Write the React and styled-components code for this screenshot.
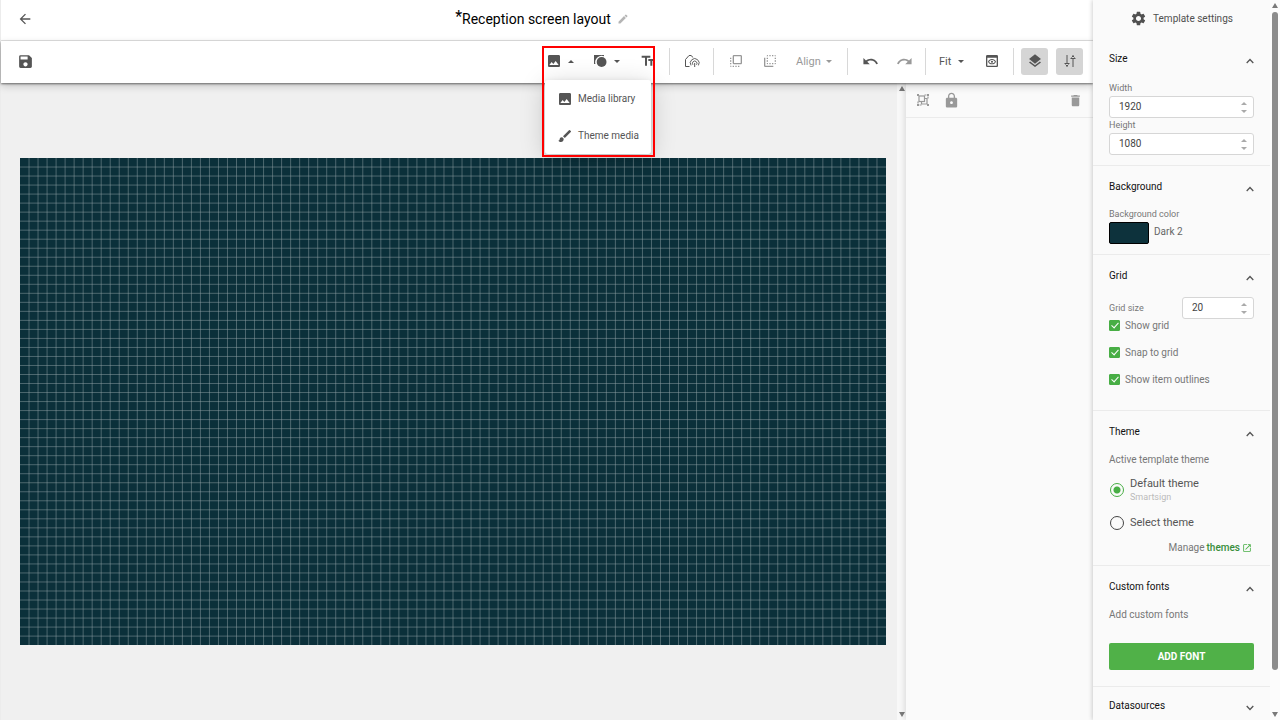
import React, {useState} from "react";
import styled, {createGlobalStyle, css} from "styled-components";
import {
    MdArrowBack,
    MdBrush,
    MdDelete,
    MdEdit,
    MdFlipToBack,
    MdFlipToFront,
    MdImage,
    MdLayers,
    MdLock,
    MdOpenInNew,
    MdOutlinePreview,
    MdRedo,
    MdSave,
    MdSettings,
    MdTextFields,
    MdUndo,
} from "react-icons/md";

const GlobalStyle = createGlobalStyle`
    * {
        box-sizing: border-box;
    }
    body {
        margin: 0;
        font-family: Roboto, "Liberation Sans", sans-serif;
        font-size: 10px;
        color: #666;
        background: #f0f0f0;
        overflow: hidden;
    }
    button, input {
        font: inherit;
        color: inherit;
    }
    svg {
        display: block;
        flex: none;
    }
`;

const Page = styled.div`
    display: flex;
    height: 100vh;
`;

const Editor = styled.div`
    display: flex;
    flex-direction: column;
    flex: 1;
    min-width: 0;
    border-left: 1px solid #ececec;
`;

const Header = styled.header`
    display: flex;
    align-items: center;
    height: 41px;
    padding: 0 48px 2px 10px;
    background: #fff;
    border-bottom: 1px solid #e6e6e6;
`;

const Toolbar = styled.div`
    position: relative;
    z-index: 2;
    display: flex;
    align-items: center;
    height: 42px;
    padding: 0 3px 2px 10px;
    background: #fff;
    box-shadow: 0 1px 2px rgba(0, 0, 0, 0.5), 0 3px 8px rgba(0, 0, 0, 0.18);
`;

const IconButton = styled.button`
    display: flex;
    align-items: center;
    justify-content: center;
    width: 28px;
    height: 28px;
    padding: 0;
    border: 0;
    background: none;
    color: ${(p) => (p.$muted ? "#999" : "#555")};
`;

const Toggle = styled(IconButton)`
    width: 27px;
    height: 27px;
    border-radius: 3px;
    background: #d5d5d5;
`;

const TextButton = styled(IconButton)`
    justify-content: space-between;
    width: ${(p) => p.$width}px;
    padding: 0 8px 0 ${(p) => p.$left || 4}px;
    font-size: 11px;
`;

const Title = styled.h1`
    flex: 1;
    display: flex;
    align-items: center;
    justify-content: center;
    gap: 6px;
    margin: 0;
    font-size: 14px;
    line-height: 20px;
    font-weight: 400;
    color: #000;

    svg {
        color: #b5b5b5;
    }
`;

const Star = styled.span`
    font-size: 16px;
    line-height: 14px;
    vertical-align: 2px;
`;

const Group = styled.div`
    display: flex;
    align-items: center;
    gap: ${(p) => p.$gap || 6}px;
    padding: 0 7px 0 ${(p) => p.$left || 8}px;

    & + & {
        border-left: 1px solid #d8d8d8;
        height: 27px;
    }
`;

const Spacer = styled.div`
    flex: 1;
`;

const Dropdown = styled.div`
    position: relative;
`;

const Menu = styled.ul`
    position: absolute;
    top: 33px;
    left: 3px;
    width: 106px;
    margin: 0;
    padding: 0;
    list-style: none;
    background: #fff;
    border-radius: 3px;
    box-shadow: 0 2px 6px rgba(0, 0, 0, 0.12), 0 4px 26px rgba(0, 0, 0, 0.18);
`;

const MenuItem = styled.button`
    display: flex;
    align-items: center;
    gap: 5px;
    width: 100%;
    height: 37px;
    padding: 0 0 0 12px;
    border: 0;
    background: none;
    color: #555;
    white-space: nowrap;
`;

const Highlight = styled.div`
    position: absolute;
    top: -1px;
    left: 0;
    width: 113px;
    height: 111px;
    border: 2px solid #ff0000;
    pointer-events: none;
`;

const Workspace = styled.div`
    display: flex;
    flex: 1;
    min-height: 0;
`;

const Stage = styled.main`
    display: flex;
    align-items: center;
    flex: 1;
    min-width: 0;
    padding: 0 11px 0 19px;
    background: #f0f0f0;
`;

const Canvas = styled.svg`
    width: 100%;
    height: auto;
`;

const ScrollBar = styled.div`
    display: flex;
    flex-direction: column;
    align-items: center;
    justify-content: space-between;
    width: ${(p) => p.$width}px;
    padding: 3px 0;
    background: ${(p) => p.$track};
`;

const Thumb = styled.div`
    width: 6px;
    flex: 1;
    margin: 4px 0 42px;
    border-radius: 3px;
    background: #8c8c8c;
`;

const Arrow = styled.span`
    border: 3px solid transparent;
    border-top-width: ${(p) => (p.$up ? 0 : 5)}px;
    border-bottom-width: ${(p) => (p.$up ? 5 : 0)}px;
    border-${(p) => (p.$up ? "bottom" : "top")}-color: #7a7a7a;
`;

const Caret = styled(Arrow)`
    border-top-width: ${(p) => (p.$up ? 0 : 3)}px;
    border-bottom-width: ${(p) => (p.$up ? 3 : 0)}px;
    border-${(p) => (p.$up ? "bottom" : "top")}-color: currentColor;
`;

const LayerPanel = styled.aside`
    width: 187px;
    background: #fafafa;
    box-shadow: -2px 0 5px rgba(0, 0, 0, 0.1);
`;

const LayerTools = styled.div`
    display: flex;
    align-items: center;
    height: 35px;
    padding: 0 4px 0 3px;
    border-bottom: 1px solid #ebebeb;
`;

const Sidebar = styled.aside`
    position: relative;
    z-index: 3;
    display: flex;
    width: 187px;
    background: #fafafa;
    box-shadow: -1px 0 4px rgba(0, 0, 0, 0.18);
`;

const Settings = styled.div`
    flex: 1;
    overflow: hidden;
`;

const SettingsHead = styled.h2`
    display: flex;
    align-items: center;
    justify-content: center;
    gap: 6px;
    height: 37px;
    margin: 0;
    font-size: 10px;
    font-weight: 400;
    color: #505050;
`;

const SectionBox = styled.section`
    padding: ${(p) => (p.$open ? 10 : 8)}px 16px 10px;
    border-top: 1px solid #ebebeb;

    ${SettingsHead} + & {
        border-color: transparent;
    }
`;

const SectionHead = styled.button`
    display: flex;
    align-items: center;
    justify-content: space-between;
    width: 100%;
    height: 20px;
    padding: 0;
    border: 0;
    background: none;
    color: #111;

    svg {
        margin-top: 6px;
        color: #555;
    }
`;

const SectionBody = styled.div`
    padding-top: ${(p) => p.$top || 11}px;
`;

const Label = styled.label`
    display: block;
    font-size: 9px;
    line-height: 15px;
    color: #777;
`;

const NumberBox = styled.div`
    display: flex;
    align-items: center;
    width: ${(p) => p.$width || "100%"};
    height: 22px;
    padding: 0 6px 0 9px;
    border: 1px solid #d6d6d6;
    border-radius: 3px;
    background: #fff;

    input {
        flex: 1;
        min-width: 0;
        padding: 0 0 2px;
        border: 0;
        outline: 0;
        background: none;
        color: #444;
        appearance: textfield;
    }
    input::-webkit-inner-spin-button {
        display: none;
    }
`;

const Spinner = styled.span`
    display: flex;
    flex-direction: column;
    gap: 5px;
    color: #aaa;
`;

const Row = styled.div`
    display: flex;
    align-items: center;
    justify-content: space-between;
`;

const Swatch = styled.button`
    width: 40px;
    height: 22px;
    padding: 0;
    border: 1px solid #000;
    border-radius: 2px;
    background: #0d323c;
`;

const SwatchRow = styled.div`
    display: flex;
    gap: 5px;
    line-height: 20px;
`;

const Checks = styled.div`
    display: flex;
    flex-direction: column;
    gap: 14px;
    padding-bottom: 14px;
`;

const CheckLabel = styled.label`
    display: flex;
    align-items: center;
    gap: 5px;
    height: 13px;
    color: #777;

    input {
        appearance: none;
        position: relative;
        width: 11px;
        height: 11px;
        margin: 0;
        border: 1px solid #48ae45;
        border-radius: 1px;
    }
    input:checked {
        background: #48ae45;
    }
    input:checked::after {
        content: "";
        position: absolute;
        top: 0;
        left: 3px;
        width: 3px;
        height: 6px;
        border: solid #fff;
        border-width: 0 1px 1px 0;
        transform: rotate(42deg);
    }
`;

const radioOn = css`
    border-color: #48ae45;
    background: radial-gradient(circle, #48ae45 3px, transparent 4px);
`;

const RadioLabel = styled.label`
    display: flex;
    align-items: center;
    gap: 6px;
    margin-top: ${(p) => p.$top}px;
    font-size: 11px;
    line-height: 14px;
    color: #555;

    input {
        appearance: none;
        width: 14px;
        height: 14px;
        margin: 0 0 0 1px;
        border: 1px solid #444;
        border-radius: 50%;
    }
    input:checked {
        ${radioOn}
    }
    small {
        display: block;
        font-size: 9px;
        line-height: 12px;
        color: #bbb;
    }
`;

const Note = styled.p`
    margin: 0;
    line-height: 15px;
    color: #777;
`;

const Manage = styled.p`
    display: flex;
    align-items: center;
    justify-content: flex-end;
    margin: 11px 2px 0 0;
    line-height: 14px;
    color: #777;

    a {
        display: flex;
        align-items: center;
        gap: 2px;
        margin-left: 2px;
        font-weight: 500;
        color: #388e3c;
        text-decoration: none;
    }
    svg {
        color: #48ae45;
    }
`;

const AddButton = styled.button`
    display: block;
    width: 100%;
    height: 27px;
    margin: 21px 0 6px;
    border: 0;
    border-radius: 2px;
    background: #50b148;
    font-weight: 700;
    color: #fff;
`;

const ShapesIcon = () => (
    <svg width="16" height="16" viewBox="0 0 16 16" fill="currentColor">
        <path d="M2 2h10v1.2A6.5 6.5 0 0 0 3.4 11H2z" />
        <circle cx="9.6" cy="9" r="4.9" />
    </svg>
);

const HomeSignalIcon = () => (
    <svg width="16" height="14" viewBox="0 0 16 14" fill="none" stroke="currentColor" strokeWidth="1">
        <path d="M5.5 12.5h-4v-7L5 1.5h2l2.2 2" />
        <path d="M7 11.4a4.4 4.4 0 1 1 7.4 0" strokeWidth="0.9" />
        <path d="M8.9 10.8a2.3 2.3 0 1 1 3.6 0" strokeWidth="0.9" />
        <path d="M10.7 9v4" />
    </svg>
);

const SlidersIcon = () => (
    <svg width="14" height="14" viewBox="0 0 14 14" fill="none" stroke="currentColor" strokeWidth="1">
        <path d="M4 1v8M4 11v2M1.5 9.5h5M10 5v8M10 1v2M7.5 4.5h5" />
        <path d="M2.5 10.5L4 12l1.5-1.5M8.5 3.5L10 2l1.5 1.5" />
    </svg>
);

const GroupIcon = () => (
    <svg width="14" height="14" viewBox="0 0 14 14" fill="none" stroke="currentColor" strokeWidth="1.2">
        <rect x="3" y="3" width="5.5" height="5.5" />
        <path d="M8.5 5.5H11V11H5.5V8.5" />
        <path d="M8.5 2h2M12 3.5v2M2 8.5v2M3.5 12h2" />
        <path fill="currentColor" stroke="none" d="M1 1h2v2H1zM11 1h2v2h-2zM1 11h2v2H1zM11 11h2v2h-2z" />
    </svg>
);

const Chevron = ({open}) => (
    <svg width="8" height="6" viewBox="0 0 8 6" fill="none" stroke="currentColor" strokeWidth="1.3">
        <path d={open ? "M0.7 5L4 1.5 7.3 5" : "M0.7 1L4 4.5 7.3 1"} />
    </svg>
);

const COLS = 96;
const ROWS = 54;
const STEP = 20;

const Grid = () => (
    <Canvas viewBox="0 0 1920 1080" role="img" aria-label="Template canvas">
        <rect width="1920" height="1080" fill="#0b303a" />
        <g stroke="#92a3a8" strokeOpacity="0.55" strokeWidth="2">
            {Array.from({length: COLS - 1}, (_, i) => (
                <line key={i} x1={(i + 1) * STEP} x2={(i + 1) * STEP} y1="0" y2="1080" />
            ))}
            {Array.from({length: ROWS - 1}, (_, i) => (
                <line key={i} y1={(i + 1) * STEP} y2={(i + 1) * STEP} x1="0" x2="1920" />
            ))}
        </g>
    </Canvas>
);

const NumberField = ({id, value, width}) => (
    <NumberBox $width={width}>
        <input id={id} type="number" defaultValue={value} />
        <Spinner>
            <Caret $up />
            <Caret />
        </Spinner>
    </NumberBox>
);

const Section = ({title, top, closed, children}) => {
    const [open, setOpen] = useState(!closed);
    return (
        <SectionBox $open={open}>
            <SectionHead onClick={() => setOpen(!open)} aria-expanded={open}>
                {title}
                <Chevron open={open} />
            </SectionHead>
            {open && <SectionBody $top={top}>{children}</SectionBody>}
        </SectionBox>
    );
};

const MediaDropdown = () => (
    <Dropdown>
        <TextButton $width={40} aria-label="Media" aria-expanded="true">
            <MdImage size={16} />
            <Caret $up />
        </TextButton>
        <Menu>
            <li>
                <MenuItem>
                    <MdImage size={16} />
                    Media library
                </MenuItem>
            </li>
            <li>
                <MenuItem>
                    <MdBrush size={16} />
                    Theme media
                </MenuItem>
            </li>
        </Menu>
        <Highlight />
    </Dropdown>
);

const EditorToolbar = () => (
    <Toolbar>
        <IconButton aria-label="Save">
            <MdSave size={17} />
        </IconButton>
        <Spacer />
        <Group>
            <MediaDropdown />
            <TextButton $width={40} aria-label="Shapes">
                <ShapesIcon />
                <Caret />
            </TextButton>
            <IconButton aria-label="Text">
                <MdTextFields size={16} />
            </IconButton>
        </Group>
        <Group>
            <IconButton aria-label="Home signal">
                <HomeSignalIcon />
            </IconButton>
        </Group>
        <Group>
            <IconButton $muted aria-label="Bring to front">
                <MdFlipToFront size={16} />
            </IconButton>
            <IconButton $muted aria-label="Send to back">
                <MdFlipToBack size={16} />
            </IconButton>
            <TextButton $muted $width={50} $left={6}>
                Align
                <Caret />
            </TextButton>
        </Group>
        <Group>
            <IconButton aria-label="Undo">
                <MdUndo size={17} />
            </IconButton>
            <IconButton $muted aria-label="Redo">
                <MdRedo size={17} />
            </IconButton>
        </Group>
        <Group>
            <TextButton $width={38} $left={5}>
                Fit
                <Caret />
            </TextButton>
            <IconButton aria-label="Preview">
                <MdOutlinePreview size={16} />
            </IconButton>
        </Group>
        <Group $gap={8} $left={7}>
            <Toggle aria-label="Layers">
                <MdLayers size={16} />
            </Toggle>
            <Toggle aria-label="Settings">
                <SlidersIcon />
            </Toggle>
        </Group>
    </Toolbar>
);

const TemplateSettings = () => (
    <Sidebar>
        <Settings>
            <SettingsHead>
                <MdSettings size={17} />
                Template settings
            </SettingsHead>
            <Section title="Size" top={13}>
                <Label htmlFor="width">Width</Label>
                <NumberField id="width" value={1920} />
                <Label htmlFor="height">Height</Label>
                <NumberField id="height" value={1080} />
            </Section>
            <Section title="Background">
                <Label as="div">Background color</Label>
                <SwatchRow>
                    <Swatch aria-label="Background color" />
                    Dark 2
                </SwatchRow>
            </Section>
            <Section title="Grid" top={12}>
                <Row>
                    <Label htmlFor="grid">Grid size</Label>
                    <NumberField id="grid" value={20} width="72px" />
                </Row>
                <Checks>
                    {["Show grid", "Snap to grid", "Show item outlines"].map((text) => (
                        <CheckLabel key={text}>
                            <input type="checkbox" defaultChecked />
                            {text}
                        </CheckLabel>
                    ))}
                </Checks>
            </Section>
            <Section title="Theme">
                <Note>Active template theme</Note>
                <RadioLabel $top={10}>
                    <input type="radio" name="theme" defaultChecked />
                    <span>
                        Default theme
                        <small>Smartsign</small>
                    </span>
                </RadioLabel>
                <RadioLabel $top={13}>
                    <input type="radio" name="theme" />
                    Select theme
                </RadioLabel>
                <Manage>
                    Manage
                    <a href="#themes">
                        themes
                        <MdOpenInNew size={10} />
                    </a>
                </Manage>
            </Section>
            <Section title="Custom fonts">
                <Note>Add custom fonts</Note>
                <AddButton>ADD FONT</AddButton>
            </Section>
            <Section title="Datasources" closed />
        </Settings>
        <ScrollBar $width={10} $track="#fcfcfc">
            <Arrow $up />
            <Thumb />
            <Arrow />
        </ScrollBar>
    </Sidebar>
);

export default function App() {
    return (
        <Page>
            <GlobalStyle />
            <Editor>
                <Header>
                    <IconButton aria-label="Back">
                        <MdArrowBack size={16} />
                    </IconButton>
                    <Title>
                        <span>
                            <Star>*</Star>Reception screen layout
                        </span>
                        <MdEdit size={12} />
                    </Title>
                </Header>
                <EditorToolbar />
                <Workspace>
                    <Stage>
                        <Grid />
                    </Stage>
                    <ScrollBar $width={9} $track="#f8f8f8">
                        <Arrow $up />
                        <Arrow />
                    </ScrollBar>
                    <LayerPanel>
                        <LayerTools>
                            <IconButton $muted aria-label="Group">
                                <GroupIcon />
                            </IconButton>
                            <IconButton $muted aria-label="Lock">
                                <MdLock size={17} />
                            </IconButton>
                            <Spacer />
                            <IconButton $muted aria-label="Delete">
                                <MdDelete size={15} />
                            </IconButton>
                        </LayerTools>
                    </LayerPanel>
                </Workspace>
            </Editor>
            <TemplateSettings />
        </Page>
    );
}
